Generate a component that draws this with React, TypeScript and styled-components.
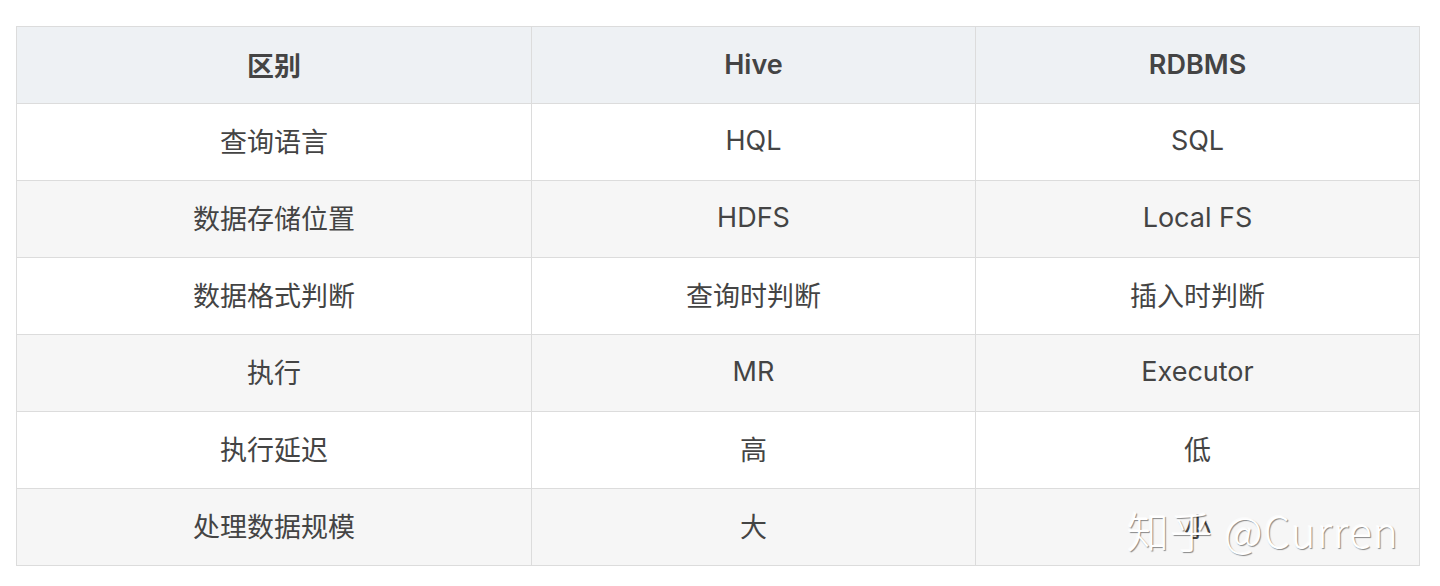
import React from 'react'
import styled, { createGlobalStyle } from 'styled-components'

const GlobalStyle = createGlobalStyle`
    body {
        margin: 0;
        background: #ffffff;
        font-family: Inter, "Noto Sans CJK SC", sans-serif;
    }
`

const Page = styled.div`
    position: relative;
    padding: 26px 21px 20px 16px;
`

const Table = styled.table`
    width: 1404px;
    border-collapse: collapse;
    table-layout: fixed;
    color: #444444;
    font-size: 27px;
`

const HeadCell = styled.th`
    height: 74px;
    padding: 0 0 2px;
    background: #eef1f4;
    border: 1px solid #dcdcdc;
    font-weight: 600;
    text-align: center;
`

const Row = styled.tr<{ $striped: boolean }>`
    background: ${p => (p.$striped ? '#f6f6f6' : '#ffffff')};
`

const Cell = styled.td`
    height: 73px;
    padding: 0 0 3px;
    border: 1px solid #dcdcdc;
    text-align: center;
    font-weight: 400;
`

const Watermark = styled.div`
    position: absolute;
    left: 1127px;
    top: 499px;
    font-family: "Noto Sans CJK SC", "Liberation Sans", sans-serif;
    font-size: 42px;
    font-weight: 300;
    color: #ffffff;
    letter-spacing: 1.3px;
    text-shadow: 1px 1px 1px rgba(0, 0, 0, 0.45), -1px -1px 0 rgba(255, 255, 255, 0.6);
    white-space: nowrap;
`

const rows = [
    ['查询语言', 'HQL', 'SQL'],
    ['数据存储位置', 'HDFS', 'Local FS'],
    ['数据格式判断', '查询时判断', '插入时判断'],
    ['执行', 'MR', 'Executor'],
    ['执行延迟', '高', '低'],
    ['处理数据规模', '大', '小'],
]

const App = () => {
    return (
        <Page>
            <GlobalStyle />
            <Table>
                <colgroup>
                    <col style={{ width: 515 }} />
                    <col style={{ width: 444 }} />
                    <col style={{ width: 444 }} />
                </colgroup>
                <thead>
                    <tr>
                        <HeadCell>区别</HeadCell>
                        <HeadCell>Hive</HeadCell>
                        <HeadCell>RDBMS</HeadCell>
                    </tr>
                </thead>
                <tbody>
                    {rows.map((row, i) => (
                        <Row key={row[0]} $striped={i % 2 === 1}>
                            {row.map(text => <Cell key={text}>{text}</Cell>)}
                        </Row>
                    ))}
                </tbody>
            </Table>
            <Watermark>知乎 @Curren</Watermark>
        </Page>
    )
}

export default App
